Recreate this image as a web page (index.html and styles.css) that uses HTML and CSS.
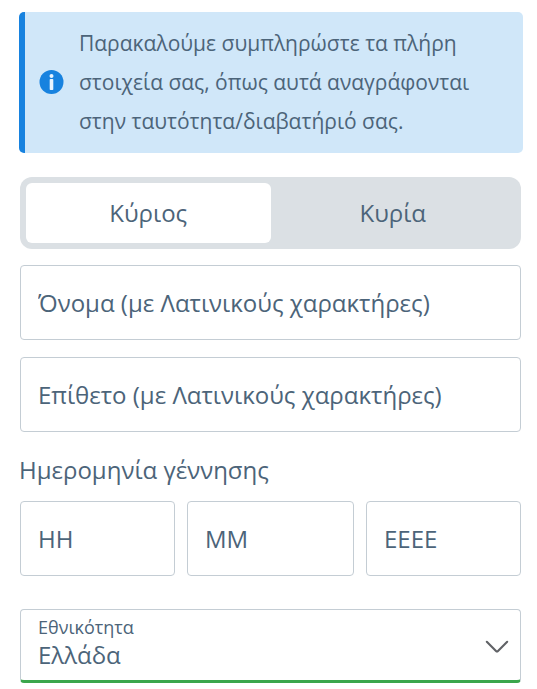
FILE: index.html
```html
<!DOCTYPE html>
<html lang="el">
<head>
	<meta charset="UTF-8">
	<meta name="viewport" content="width=device-width, initial-scale=1.0">
	<title>Στοιχεία</title>
	<link rel="stylesheet" href="styles.css">
</head>
<body>
	<div class="alert">
		<svg class="alert-icon" viewBox="0 0 24 24">
			<circle cx="12" cy="12" r="12" fill="#1782df"/>
			<circle cx="12" cy="5.9" r="2" fill="#e8f4ff"/>
			<rect x="10.2" y="9" width="3.6" height="11" rx="0.8" fill="#e8f4ff"/>
		</svg>
		<p class="alert-text">Παρακαλούμε συμπληρώστε τα πλήρη<br>στοιχεία σας, όπως αυτά αναγράφονται<br>στην ταυτότητα/διαβατήριό σας.</p>
	</div>

	<form class="form">
		<div class="toggle">
			<button type="button" class="toggle-item active">Κύριος</button>
			<button type="button" class="toggle-item">Κυρία</button>
		</div>

		<input class="field" type="text" name="firstName" placeholder="Όνομα (με Λατινικούς χαρακτήρες)">
		<input class="field" type="text" name="lastName" placeholder="Επίθετο (με Λατινικούς χαρακτήρες)">

		<div class="birth-title">Ημερομηνία γέννησης</div>
		<div class="birth">
			<input class="field" type="text" name="day" placeholder="ΗΗ">
			<input class="field" type="text" name="month" placeholder="ΜΜ">
			<input class="field" type="text" name="year" placeholder="ΕΕΕΕ">
		</div>

		<div class="select valid">
			<div class="select-body">
				<label for="nationality">Εθνικότητα</label>
				<select id="nationality" name="nationality">
					<option>Ελλάδα</option>
				</select>
			</div>
			<svg class="arrow" viewBox="0 0 24 14">
				<path d="M1.8 1.8 L11 11 Q12 12 13 11 L22.2 1.8" fill="none" stroke="#606266" stroke-width="2.1" stroke-linecap="round"/>
			</svg>
		</div>
	</form>
</body>
</html>
```

FILE: styles.css
```css
* {
	box-sizing: border-box;
}

body {
	margin: 0;
	padding: 12px 14px 0 19px;
	background-color: #fff;
	color: #4c6479;
	font-family: "Open Sans", "Noto Sans", sans-serif;
	font-size: 24px;
}

input, select, button {
	font: inherit;
	color: inherit;
}

/* Info message */
.alert {
	display: flex;
	align-items: center;
	gap: 15px;
	height: 141px;
	padding: 0 0 2px 14px;
	border-left: 6px solid #1782df;
	border-radius: 5px;
	background-color: #d0e7f9;
}

.alert-icon {
	width: 25px;
	height: 24px;
	flex: none;
}

.alert-text {
	margin: 0;
	padding-top: 2px;
	font-size: 21px;
	line-height: 39px;
	white-space: nowrap;
}

.form {
	width: 501px;
	margin: 24px 0 0 1px;
}

/* Title switch */
.toggle {
	display: flex;
	height: 72px;
	margin-bottom: 16px;
	padding: 6px;
	border-radius: 12px;
	background-color: #dbe0e4;
}

.toggle-item {
	flex: 1;
	padding: 0 0 2px;
	border: 0;
	border-radius: 6px;
	background: none;
}

.toggle-item.active {
	background-color: #fff;
}

/* Text fields */
.field {
	display: block;
	width: 100%;
	height: 75px;
	margin-bottom: 17px;
	padding: 0 17px;
	border: 1px solid #c4cdd4;
	border-radius: 4px;
	background-color: #fff;
}

.field::placeholder {
	color: inherit;
	opacity: 1;
}

/* Birth date */
.birth-title {
	height: 52px;
	margin: 0 0 0 -1px;
	line-height: 42px;
}

.birth {
	display: grid;
	grid-template-columns: 155px 167px 155px;
	gap: 12px;
	margin-bottom: 33px;
}

.birth .field {
	margin: 0;
}

/* Nationality */
.select {
	display: flex;
	align-items: center;
	height: 74px;
	padding: 0 11px 0 17px;
	border: 1px solid #c4cdd4;
	border-radius: 4px;
}

.select.valid {
	border-bottom: 3px solid #3ba64c;
}

.select-body {
	display: flex;
	flex: 1;
	flex-direction: column;
	padding-bottom: 7px;
}

.select label {
	margin-bottom: -1px;
	font-size: 18px;
	line-height: 24px;
}

.select select {
	height: 30px;
	padding: 0;
	border: 0;
	background: none;
	appearance: none;
}

.arrow {
	width: 24px;
	height: 14px;
	margin-top: 4px;
}
```
